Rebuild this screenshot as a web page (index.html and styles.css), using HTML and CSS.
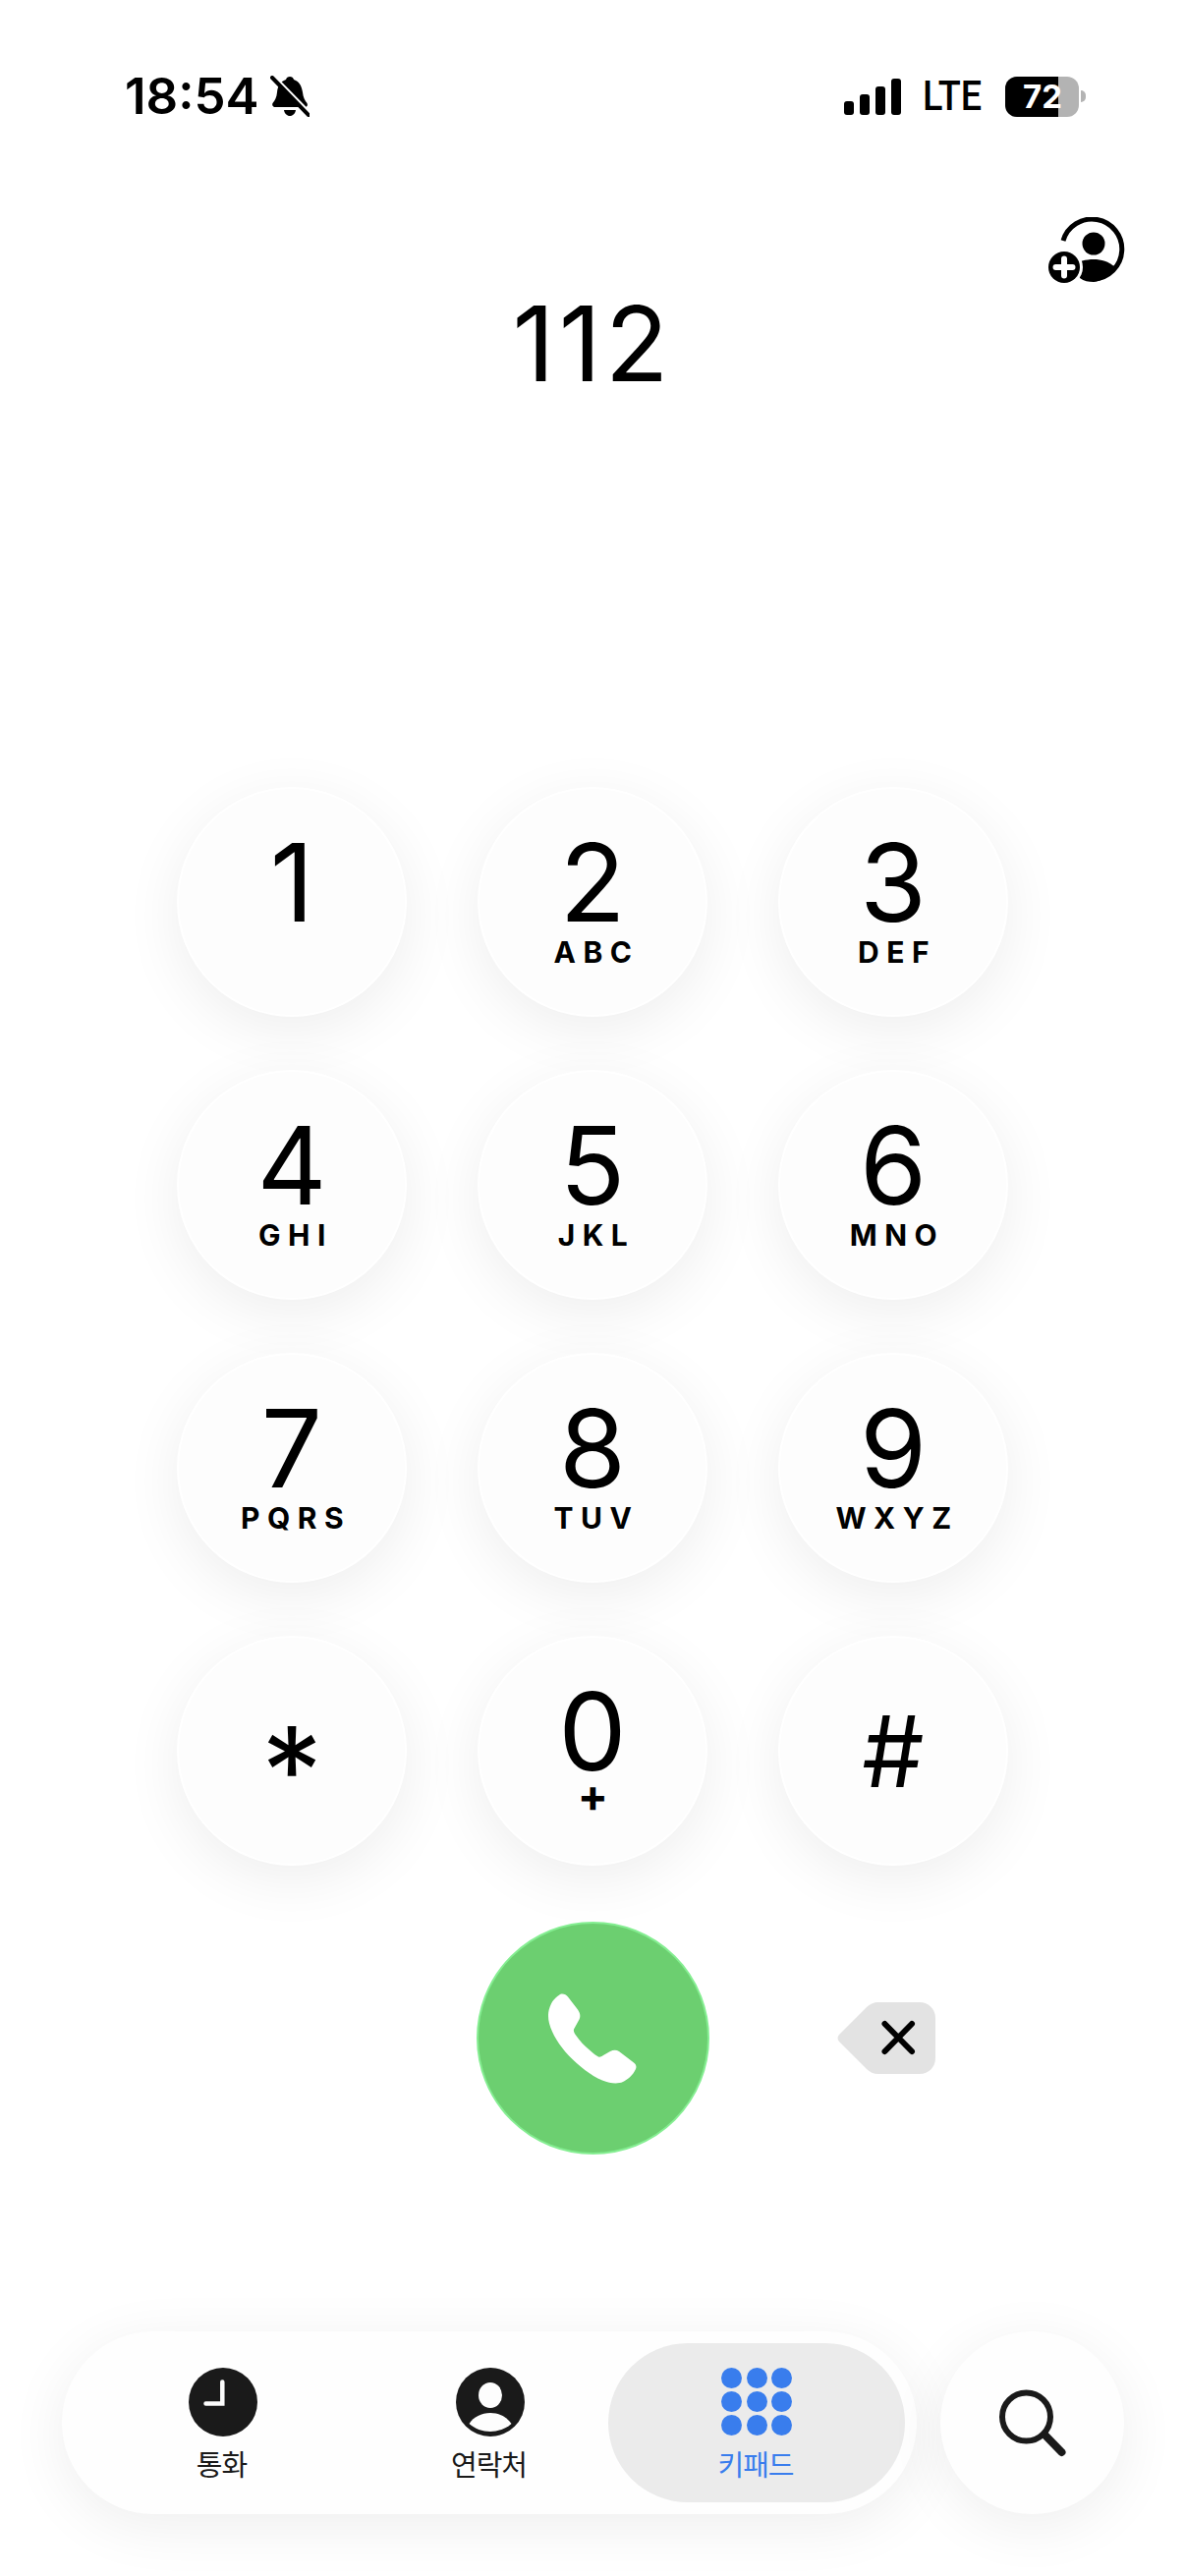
FILE: index.html
```html
<!DOCTYPE html>
<html lang="ko">
<head>
    <meta charset="UTF-8">
    <meta name="viewport" content="width=device-width, initial-scale=1.0">
    <title>키패드</title>
    <link rel="stylesheet" href="styles.css">
</head>
<body>
    <!-- Status bar -->
    <header class="status-bar">
        <div class="status-left">
            <span class="time">18:54</span>
            <svg class="bell" viewBox="0 0 40 42" width="40" height="42">
                <path d="M20 1c2 0 3.500 1 4 3 6 2 8 7 9 13 .6 5 2 8 4.500 11 1 2 0 4-2 4H5c-2 0-3.500-2-2.500-4 2.500-3 4-6 4.500-11 .6-6 3-11 9-13 .5-2 2-3 4-3z"/>
                <path d="M14 35h12c-.5 3.500-3 6-6 6s-5.500-2.500-6-6z"/>
                <path class="bell-gap" d="M0 -2L42 41"/>
                <path class="bell-slash" d="M2 2L39 40"/>
            </svg>
        </div>
        <div class="status-right">
            <div class="signal">
                <span class="bar bar-1"></span>
                <span class="bar bar-2"></span>
                <span class="bar bar-3"></span>
                <span class="bar bar-4"></span>
            </div>
            <span class="network">LTE</span>
            <div class="battery">
                <div class="battery-body"><span class="battery-level"></span><span class="battery-text">72</span></div>
                <span class="battery-nub"></span>
            </div>
        </div>
    </header>

    <!-- Number display -->
    <section class="display">
        <svg class="add-contact" viewBox="0 0 80 67" width="80" height="67">
            <path class="ring" d="M15 24A30.500 30.500 0 1 1 46 63"/>
            <circle cx="46" cy="27" r="11.500"/>
            <path d="M25 49c5-4 13-6 21-6s15 2 22 8c-5 8-13 14-22 15-5 0-10-1-14-4z"/>
            <circle class="plus-gap" cx="16" cy="51" r="19"/>
            <circle cx="16" cy="51" r="16"/>
            <path class="plus" d="M16 42.500v17M7.500 51h17"/>
        </svg>
        <div class="number">112</div>
    </section>

    <!-- Keypad -->
    <main class="keypad">
        <button class="key"><span class="digit">1</span></button>
        <button class="key"><span class="digit">2</span><span class="letters">ABC</span></button>
        <button class="key"><span class="digit">3</span><span class="letters">DEF</span></button>
        <button class="key"><span class="digit">4</span><span class="letters">GHI</span></button>
        <button class="key"><span class="digit">5</span><span class="letters">JKL</span></button>
        <button class="key"><span class="digit">6</span><span class="letters">MNO</span></button>
        <button class="key"><span class="digit">7</span><span class="letters">PQRS</span></button>
        <button class="key"><span class="digit">8</span><span class="letters">TUV</span></button>
        <button class="key"><span class="digit">9</span><span class="letters">WXYZ</span></button>
        <button class="key"><span class="digit star">*</span></button>
        <button class="key"><span class="digit">0</span><span class="letters plus-sign">+</span></button>
        <button class="key"><span class="digit hash">#</span></button>
    </main>

    <!-- Call row -->
    <section class="call-row">
        <button class="call">
            <svg viewBox="0 -1.500 94 94" width="94" height="94">
                <path d="M13 .5C16-.5 19 .5 21 3L31 16C33.500 19.500 34 23 32.500 26L27 36C26.500 38 27.500 40 29 42C33 48 38 53 44 58C47 61 50 63 52 64C53.500 64.500 55 64 57 62.500L64 58.500C67 57 70 56.500 73 58.500L88 70C90.500 72 91 74 90 76.500C87 83 82 87 77 89.500C71 92 64 91 56 88C44 83 32 73 22 63C12 52 5 41 2 30C0 22 1 16 4 10C6 6 9 3 13 .5Z"/>
            </svg>
        </button>
        <svg class="backspace" viewBox="0 0 100 73" width="100" height="73">
            <path class="backspace-body" d="M42 0H84C93 0 100 7 100 16V57C100 66 93 73 84 73H42C37 73 33 71 30 68L2 40C0 38 0 35 2 33L30 5C33 2 37 0 42 0Z"/>
            <path class="backspace-x" d="M48.500 22L76 50M76 22L48.500 50"/>
        </svg>
    </section>

    <!-- Bottom navigation -->
    <nav class="bottom-nav">
        <div class="tabs">
            <div class="tab">
                <svg viewBox="0 0 70 70" width="70" height="70">
                    <circle class="icon-dark" cx="35" cy="35" r="35"/>
                    <path class="clock-hands" d="M34.300 14.500V36.500H17.500"/>
                </svg>
                <span class="tab-label">통화</span>
            </div>
            <div class="tab">
                <svg viewBox="0 0 70 70" width="70" height="70">
                    <circle class="icon-dark" cx="35" cy="35" r="35"/>
                    <ellipse class="icon-light" cx="35" cy="28" rx="12" ry="13"/>
                    <path class="icon-light" d="M13.500 57C18 50 26 46 35 46S52 50 56.500 57C51 62 43 65 35 65S19 62 13.500 57Z"/>
                </svg>
                <span class="tab-label">연락처</span>
            </div>
            <div class="tab tab-active">
                <div class="dots">
                    <span></span><span></span><span></span>
                    <span></span><span></span><span></span>
                    <span></span><span></span><span></span>
                </div>
                <span class="tab-label">키패드</span>
            </div>
        </div>
        <button class="search">
            <svg viewBox="0 0 70 70" width="70" height="70">
                <circle class="lens" cx="28.500" cy="29" r="24.500"/>
                <path class="lens-handle" d="M47 47L64.500 65"/>
            </svg>
        </button>
    </nav>
</body>
</html>
```

FILE: styles.css
```css
* {
    margin: 0;
    padding: 0;
    box-sizing: border-box;
}

html, body {
    width: 1206px;
    height: 2622px;
    overflow: hidden;
}

body {
    background-color: #fff;
    color: #000;
    font-family: 'Inter', 'Noto Sans CJK KR', sans-serif;
}

button {
    border: none;
    font-family: inherit;
    color: inherit;
}

/* Status bar */
.status-bar {
    display: flex;
    justify-content: space-between;
    align-items: center;
    height: 196px;
    padding: 0 101px 0 127px;
}

.status-left,
.status-right {
    display: flex;
    align-items: center;
}

.time {
    font-size: 51px;
    font-weight: 600;
    line-height: 60px;
}

.bell {
    margin-left: 11px;
}

.bell-gap {
    stroke: #fff;
    stroke-width: 5;
    fill: none;
}

.bell-slash {
    stroke: #000;
    stroke-width: 4;
    stroke-linecap: round;
    fill: none;
}

.signal {
    display: flex;
    align-items: flex-end;
    gap: 6px;
    height: 37px;
}

.bar {
    width: 10px;
    border-radius: 3px;
    background-color: #000;
}

.bar-1 { height: 14px; }
.bar-2 { height: 21px; }
.bar-3 { height: 29px; }
.bar-4 { height: 37px; }

.network {
    width: 60px;
    margin-left: 22px;
    font-family: 'Roboto', sans-serif;
    font-size: 42px;
    font-weight: 500;
    line-height: 42px;
    transform: scaleX(0.9);
    transform-origin: left center;
}

.battery {
    display: flex;
    align-items: center;
    margin-left: 24px;
}

.battery-body {
    position: relative;
    width: 75px;
    height: 41px;
    border-radius: 12px;
    background-color: #b3b3b3;
    overflow: hidden;
}

.battery-level {
    position: absolute;
    top: 0;
    left: 0;
    width: 54px;
    height: 100%;
    background-color: #000;
}

.battery-text {
    position: absolute;
    top: 0;
    left: 18px;
    color: #fff;
    font-size: 33px;
    font-weight: 700;
    line-height: 41px;
}

.battery-nub {
    width: 5px;
    height: 12px;
    margin-left: 2px;
    border-radius: 0 5px 5px 0;
    background-color: #b3b3b3;
}

/* Number display */
.display {
    position: relative;
    height: 605px;
    text-align: center;
}

.add-contact {
    position: absolute;
    top: 25px;
    left: 1067px;
}

.ring {
    fill: none;
    stroke: #000;
    stroke-width: 5;
}

.plus-gap {
    fill: #fff;
}

.plus {
    fill: none;
    stroke: #fff;
    stroke-width: 6;
    stroke-linecap: round;
}

.number {
    padding-top: 96px;
    font-size: 106px;
    font-weight: 400;
    letter-spacing: 4px;
    line-height: 116px;
}

/* Keypad */
.keypad {
    display: grid;
    grid-template-columns: repeat(3, 234px);
    grid-auto-rows: 234px;
    column-gap: 72px;
    row-gap: 54px;
    padding-left: 180px;
}

.key {
    display: flex;
    flex-direction: column;
    align-items: center;
    padding-top: 40px;
    border: 2px solid #fff;
    border-radius: 50%;
    background-color: #fdfdfd;
    box-shadow: 0 14px 60px rgba(0, 0, 0, 0.07);
}

.digit {
    font-size: 110px;
    font-weight: 400;
    line-height: 110px;
}

.star {
    padding-top: 40px;
    font-size: 124px;
}

.hash {
    padding-top: 21px;
    font-size: 100px;
}

.letters {
    margin-top: 1px;
    padding-left: 8px;
    font-size: 30px;
    font-weight: 700;
    letter-spacing: 7.500px;
    line-height: 30px;
}

.plus-sign {
    margin-top: -10px;
    font-size: 46px;
    line-height: 40px;
}

/* Call row */
.call-row {
    display: flex;
    align-items: center;
    height: 237px;
    margin-top: 57px;
    padding-left: 485px;
}

.call {
    display: flex;
    align-items: center;
    justify-content: center;
    width: 237px;
    height: 237px;
    border: 2px solid #85ee92;
    border-radius: 50%;
    background-color: #6ccf70;
}

.call svg {
    fill: #fff;
}

.backspace {
    margin-left: 130px;
}

.backspace-body {
    fill: #e3e3e3;
}

.backspace-x {
    fill: none;
    stroke: #000;
    stroke-width: 6;
    stroke-linecap: round;
}

/* Bottom navigation */
.bottom-nav {
    display: flex;
    gap: 24px;
    margin-top: 180px;
    padding-left: 63px;
}

.tabs {
    display: flex;
    width: 870px;
    height: 186px;
    padding: 12px 12px 12px 27.500px;
    border-radius: 93px;
    background-color: #fefefe;
    box-shadow: 0 12px 60px rgba(0, 0, 0, 0.07);
}

.tab {
    display: flex;
    flex-direction: column;
    align-items: center;
    width: 272px;
    padding-top: 25px;
}

.tab svg,
.dots {
    height: 70px;
}

.icon-dark {
    fill: #1a1a1a;
}

.icon-light {
    fill: #fdfdfd;
}

.clock-hands {
    fill: none;
    stroke: #fdfdfd;
    stroke-width: 4.500;
    stroke-linecap: round;
}

.tab-label {
    margin-top: 10px;
    padding-right: 2px;
    color: #1a1a1a;
    font-size: 29px;
    letter-spacing: -1px;
    line-height: 40px;
    white-space: nowrap;
}

.tab-active {
    width: 302px;
    margin-left: -15.500px;
    border-radius: 81px;
    background-color: #ebebeb;
}

.tab-active .tab-label {
    color: #397ded;
}

.dots {
    display: grid;
    grid-template-columns: repeat(3, 21px);
    grid-auto-rows: 21px;
    column-gap: 4.500px;
    row-gap: 3px;
}

.dots span {
    border-radius: 50%;
    background-color: #397ded;
}

.search {
    display: flex;
    align-items: center;
    justify-content: center;
    width: 187px;
    height: 186px;
    border-radius: 50%;
    background-color: #fefefe;
    box-shadow: 0 12px 60px rgba(0, 0, 0, 0.07);
}

.lens {
    fill: none;
    stroke: #1a1a1a;
    stroke-width: 6;
}

.lens-handle {
    fill: none;
    stroke: #1a1a1a;
    stroke-width: 8;
    stroke-linecap: round;
}
```
